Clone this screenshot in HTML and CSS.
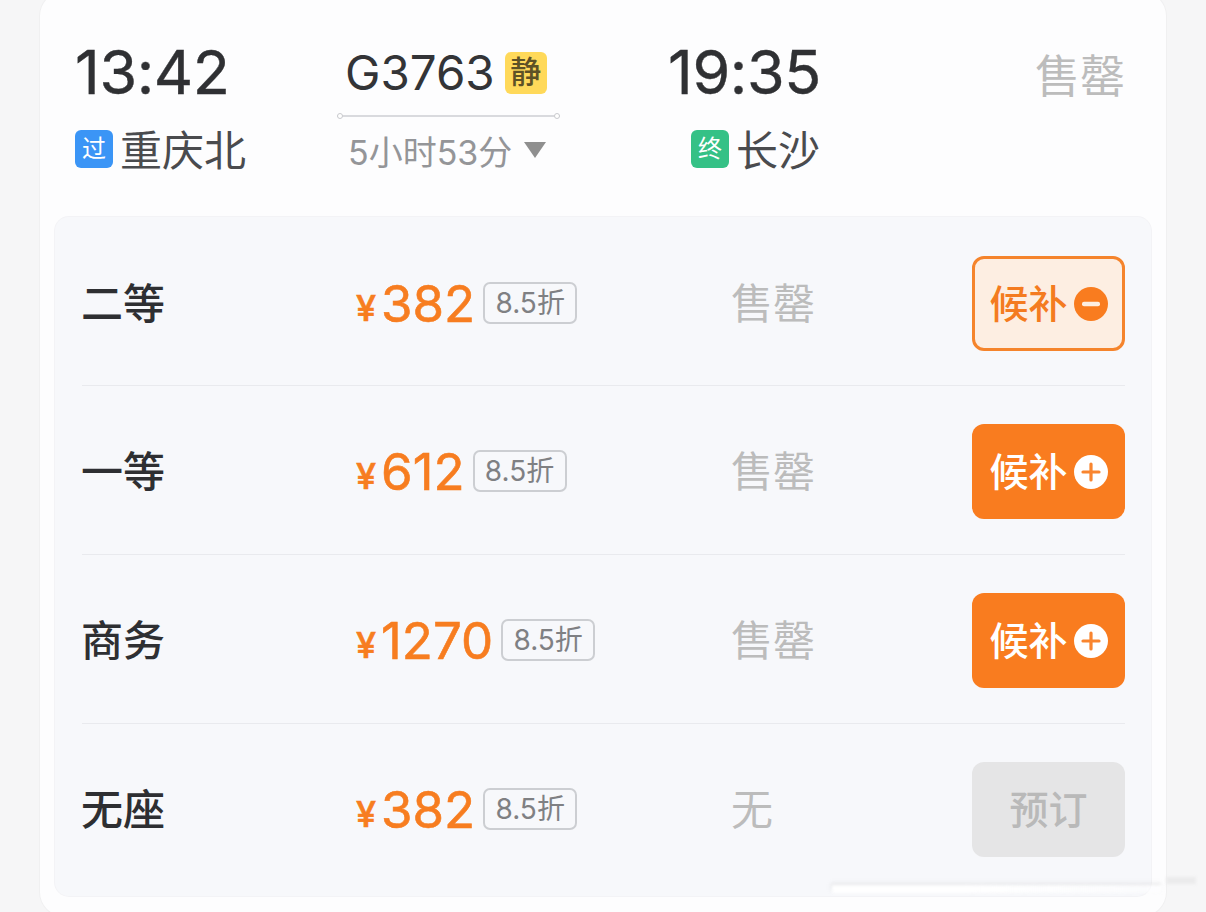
FILE: index.html
```html
<!DOCTYPE HTML>
<html>

<head>
    <title>G3763</title>
    <meta name="viewport" content="width=device-width, initial-scale=1">
    <link rel="stylesheet" href="styles.css">
</head>

<body>
    <div class="card">
        <div class="train">
            <div class="time">13:42</div>
            <div class="middle">
                <div class="number">G3763<span class="quiet">静</span></div>
                <div class="line"></div>
            </div>
            <div class="time">19:35</div>
            <div class="soldout-top">售罄</div>

            <div class="station"><span class="mark blue">过</span><span class="name">重庆北</span></div>
            <div class="duration">5小时53分<span class="arrow"></span></div>
            <div class="station end"><span class="mark green">终</span><span class="name">长沙</span></div>
        </div>

        <div class="panel">
            <div class="row">
                <div class="seat">二等</div>
                <div class="price"><span class="yen">¥</span>382<span class="off">8.5折</span></div>
                <div class="left">售罄</div>
                <div class="button active"><span class="label">候补</span>
                    <svg class="sign" viewBox="0 0 34 34"><circle cx="17" cy="17" r="17" fill="#f97c1f"/><rect x="8" y="14.8" width="18" height="4.4" rx="2" fill="#fdeee2"/></svg>
                </div>
            </div>
            <div class="row">
                <div class="seat">一等</div>
                <div class="price"><span class="yen">¥</span>612<span class="off">8.5折</span></div>
                <div class="left">售罄</div>
                <div class="button"><span class="label">候补</span>
                    <svg class="sign" viewBox="0 0 34 34"><circle cx="17" cy="17" r="17" fill="#fff"/><path d="M17 9v16M9 17h16" stroke="#f9852f" stroke-width="3.2" stroke-linecap="round"/></svg>
                </div>
            </div>
            <div class="row">
                <div class="seat">商务</div>
                <div class="price"><span class="yen">¥</span>1270<span class="off">8.5折</span></div>
                <div class="left">售罄</div>
                <div class="button"><span class="label">候补</span>
                    <svg class="sign" viewBox="0 0 34 34"><circle cx="17" cy="17" r="17" fill="#fff"/><path d="M17 9v16M9 17h16" stroke="#f9852f" stroke-width="3.2" stroke-linecap="round"/></svg>
                </div>
            </div>
            <div class="row">
                <div class="seat">无座</div>
                <div class="price"><span class="yen">¥</span>382<span class="off">8.5折</span></div>
                <div class="left">无</div>
                <div class="button disabled"><span class="label">预订</span></div>
            </div>
        </div>
    </div>
    <div class="smear"></div>
    <div class="smear-end"></div>
</body>

</html>
```

FILE: styles.css
```css
html {
    font-family: Inter, "Noto Sans CJK SC", sans-serif;
}

body {
    margin: 0;
    height: 912px;
    overflow: hidden;
    position: relative;
    background-color: #f6f6f7;
}

.card {
    margin: -8px 0 0 40px;
    width: 1126px;
    height: 924px;
    padding-top: 8px;
    box-sizing: border-box;
    background-color: #fdfdfe;
    border-radius: 24px;
    box-shadow: 0 0 0 1px #f0f0f1;
}

.train {
    display: grid;
    grid-template-columns: 262px 331px 152px 1fr;
    grid-template-rows: 116px 68px;
    padding: 0 41px 0 35px;
    height: 217px;
    box-sizing: border-box;
}

.time {
    font-size: 61px;
    line-height: 72px;
    padding-top: 36px;
    height: 80px;
    letter-spacing: -0.4px;
    color: #2f3033;
    -webkit-text-stroke: 0.4px #2f3033;
}

.middle {
    width: 223px;
    padding-top: 52px;
    box-sizing: border-box;
}

.number {
    display: flex;
    align-items: center;
    padding-left: 8px;
    font-size: 47.5px;
    line-height: 42px;
    color: #333437;
}

.quiet {
    width: 42px;
    height: 42px;
    margin-left: 10px;
    border-radius: 6px;
    background-color: #ffd95a;
    color: #5e5126;
    font-size: 31px;
    font-weight: 500;
    line-height: 40px;
    text-align: center;
}

.line {
    position: relative;
    height: 2px;
    margin-top: 21px;
    background-color: #d9dade;
}

.line::before,
.line::after {
    content: "";
    position: absolute;
    top: -2px;
    width: 6px;
    height: 6px;
    box-sizing: border-box;
    border: 1px solid #c9cace;
    border-radius: 50%;
    background-color: #fff;
}

.line::before {
    left: 0;
}

.line::after {
    right: 0;
}

.soldout-top {
    padding-top: 53px;
    font-size: 45px;
    line-height: 48px;
    text-align: right;
    color: #bcbcbc;
}

.station {
    display: flex;
    align-items: center;
    height: 68px;
    font-size: 42px;
    color: #4a4b4e;
}

.station.end {
    justify-content: flex-end;
}

.name {
    margin-top: -6px;
}

.mark {
    width: 38px;
    height: 38px;
    margin: -2px 7px 0 0;
    border-radius: 6px;
    color: #fff;
    font-size: 24px;
    line-height: 38px;
    text-align: center;
}

.blue {
    background-color: #3b95f6;
}

.green {
    background-color: #35c186;
}

.duration {
    display: flex;
    align-items: center;
    height: 68px;
    width: 223px;
    padding-left: 11px;
    box-sizing: border-box;
    font-size: 34px;
    color: #949598;
}

.arrow {
    width: 0;
    height: 0;
    margin-left: 12px;
    border-left: 11px solid transparent;
    border-right: 11px solid transparent;
    border-top: 16px solid #8f8f8f;
}

.panel {
    width: 1096px;
    height: 679px;
    margin-left: 15px;
    padding: 0 26px 0 27px;
    box-sizing: border-box;
    background-color: #f7f8fb;
    border-radius: 14px;
    box-shadow: 0 0 0 1px #f3f3f6;
}

.row {
    display: grid;
    grid-template-columns: 274px 376px 240px 153px;
    align-items: center;
    height: 169px;
    padding: 39px 0 34px;
    box-sizing: border-box;
    border-bottom: 1px solid #e9eaee;
}

.row + .row {
    padding: 38px 0 35px;
}

.row:last-child {
    border-bottom: none;
    height: 168px;
}

.seat {
    margin-left: -1px;
    font-size: 42px;
    font-weight: 500;
    line-height: 50px;
    color: #2e2f32;
}

.price {
    display: flex;
    align-items: center;
    font-size: 51px;
    line-height: 60px;
    color: #f77d20;
    -webkit-text-stroke: 0.6px #f77d20;
}

.yen {
    margin-top: 8px;
    margin-right: 5px;
    font-size: 36px;
    font-weight: 500;
}

.off {
    margin-left: 8px;
    width: 94px;
    height: 42px;
    margin-top: -2px;
    box-sizing: border-box;
    border: 2px solid #ccced2;
    border-radius: 7px;
    font-size: 28px;
    line-height: 38px;
    text-align: center;
    color: #7f8083;
    -webkit-text-stroke: 0;
}

.left {
    margin-left: -1px;
    font-size: 42px;
    line-height: 50px;
    color: #bcbcbc;
}

.button {
    display: flex;
    align-items: center;
    justify-content: center;
    gap: 6px;
    height: 95px;
    box-sizing: border-box;
    border-radius: 12px;
    background-color: #f97c1f;
    color: #fff;
    font-size: 39px;
    font-weight: 500;
}

.label {
    margin-top: -6px;
}

.button.active {
    border: 3px solid #f5842c;
    background-color: #fdeee2;
    color: #f47b20;
}

.button.disabled {
    background-color: #e5e5e6;
    color: #b9b9b9;
}

.sign {
    width: 34px;
    height: 34px;
}

.smear {
    position: absolute;
    left: 832px;
    top: 885px;
    width: 330px;
    height: 8px;
    background: linear-gradient(to right, #fff 0%, #fff 40%, rgba(253, 253, 254, 0.6) 100%);
    box-shadow: -1px -2px 3px rgba(170, 170, 170, 0.25);
    filter: blur(1.5px);
}

.smear-end {
    position: absolute;
    left: 1166px;
    top: 877px;
    width: 30px;
    height: 7px;
    background-color: #ebebec;
    filter: blur(1.5px);
}
```
